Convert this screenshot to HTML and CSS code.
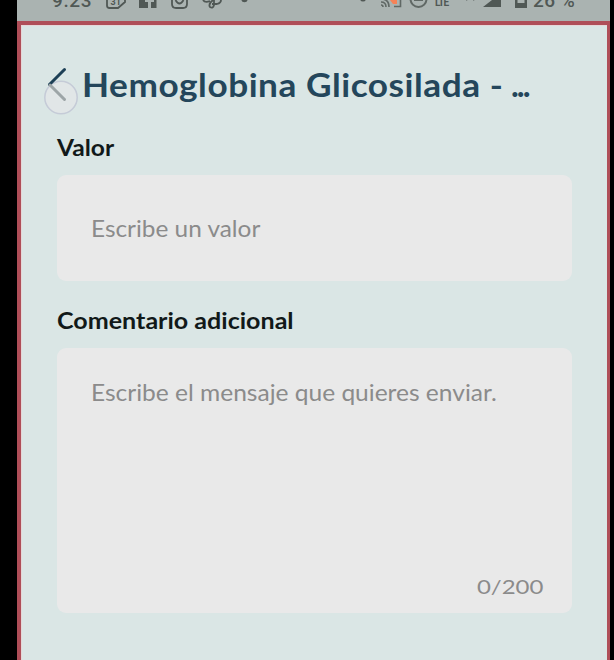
FILE: index.html
```html
<!DOCTYPE html>
<html lang="es">
<head>
<meta charset="utf-8">
<title>Hemoglobina Glicosilada</title>
<link rel="stylesheet" href="styles.css">
</head>
<body>
<div class="phone">
  <header class="status">
    <span class="time">9.23</span>
    <svg class="notices" width="144" height="12" viewBox="0 0 144 12" fill="none" stroke="#505855" stroke-width="1.800">
      <path d="M1 0V5.500Q1 8 3.500 8H12L19 2V0"/>
      <text class="tiny" x="4.500" y="4.500">31</text>
      <path d="M33 0H39V2H42V8H33ZM45 8V2H48V0H50.500V8Z" fill="#505855" stroke="none"/>
      <path d="M66 0V4Q66 8 70 8H77Q81 8 81 4V0M69.500 0Q73.500 7 77.500 0"/>
      <path d="M97 0Q99 3 104 1M107 0Q102 4 104 7Q107 9 108 5V0M106 4H111Q115 3 115 0"/>
      <circle cx="138.500" cy="-1" r="3.200" fill="#505855" stroke="none"/>
    </svg>
    <svg class="signals" width="144" height="12" viewBox="0 0 144 12" fill="none" stroke="#606865" stroke-width="1.600">
      <circle cx="6" cy="-1.500" r="3" fill="#505855" stroke="none"/>
      <path d="M33 0H40V4H36Z" fill="#f58257" stroke="none"/>
      <path d="M37 6.500H43.500V0M24 5Q26 5 26 7M24 2Q29 2 29 7M24-1Q32-1 32 7"/>
      <path d="M53.500-1A8 8 0 0 0 69.500-1M57 0H66" stroke-width="2"/>
      <text class="tiny lte" x="78" y="6">LTE</text>
      <path d="M109 0L111-1M116 0L118-1"/>
      <path d="M126 7L135 0H144V7Z" fill="#505855" stroke="none"/>
    </svg>
    <svg class="battery" width="12" height="12" viewBox="0 0 12 12"><path fill="#505855" fill-rule="evenodd" d="M0 0H12V8H0ZM2.500 0V3H9.500V0Z"/></svg>
    <span class="charge">26 %</span>
  </header>
  <main class="screen">
    <div class="heading">
      <svg class="back" width="38" height="58" viewBox="0 0 38 58" fill="none" stroke-width="3" stroke-linecap="round">
        <circle cx="19" cy="39.500" r="16.200" fill="#e1e6e7" stroke="#c5cbd7" stroke-width="1.500"/>
        <path d="M22.500 11.500L7.500 26.500" stroke="#1d4056"/>
        <path d="M8 27L22.500 41.500" stroke="#9da5a7"/>
      </svg>
      <h1><span class="title">Hemoglobina Glicosilada -</span><span class="dots">...</span></h1>
    </div>
    <section class="field">
      <h2 class="label-value">Valor</h2>
      <div class="box"><span class="hint-value">Escribe un valor</span></div>
    </section>
    <section class="field">
      <h2 class="label-comment">Comentario adicional</h2>
      <div class="box area"><span class="hint-message">Escribe el mensaje que quieres enviar.</span><span class="count">0/200</span></div>
    </section>
  </main>
</div>
</body>
</html>
```
FILE: styles.css
```css
* { box-sizing: border-box; }
body { margin: 0; background: #000; height: 660px; overflow: hidden; font-family: Lato, sans-serif; }
.phone { width: 593px; height: 660px; margin-left: 17px; display: flex; flex-direction: column; background: #aab3b1; }
.status { height: 21px; flex: none; display: flex; align-items: flex-start; padding-left: 35px; font: 500 19px/22px Roboto, sans-serif; color: #505855; white-space: nowrap; overflow: hidden; }
.time, .charge { margin-top: -10px; }
.time { width: 54px; letter-spacing: .6px; }
.signals { margin-left: 107px; }
.battery { margin: 0 6px 0 14px; }
.charge { letter-spacing: .5px; }
.tiny { font: bold 9px Roboto, sans-serif; fill: #505855; stroke: none; }
.lte { font-size: 10px; letter-spacing: -1px; }
.screen { flex: 1; background: #dae6e5; border: solid #af4e58; border-width: 4px 3px 0 4px; padding: 36px 36px 0 36px; box-shadow: inset 1px 1px #e5d7d8; }
.heading { display: flex; height: 64px; margin-left: -15px; }
.back { flex: none; margin-top: -3px; }
h1 { margin: 4px 0 0 2px; display: flex; font: bold 33px/38px Lato, sans-serif; color: #24465b; white-space: pre; }
h2, .title, .box span { transform-origin: left center; }
.title { width: 429px; letter-spacing: .5px; transform: scaleX(1.066); }
.dots { letter-spacing: -2px; }
h2 { margin: 0; font: bold 23px/44px Lato, sans-serif; color: #111919; }
.label-value { transform: scaleX(1.07); }
.label-comment { transform: scaleX(1.09); }
.field { height: 173px; }
.field h2 { height: 50px; }
.box { height: 106px; width: 515px; border-radius: 9px; background: #e9e9e9; padding: 38px 29px 0 34px; color: #8b8b8b; font-size: 23px; line-height: 30px; }
.box span { display: block; }
.hint-value { transform: scaleX(1.06); }
.hint-message { transform: scaleX(1.066); }
.area { height: 265px; padding-top: 29px; padding-bottom: 12px; display: flex; flex-direction: column; justify-content: space-between; }
.box .count { align-self: flex-end; font-size: 20px; transform-origin: right center; transform: scaleX(1.2); }
```
